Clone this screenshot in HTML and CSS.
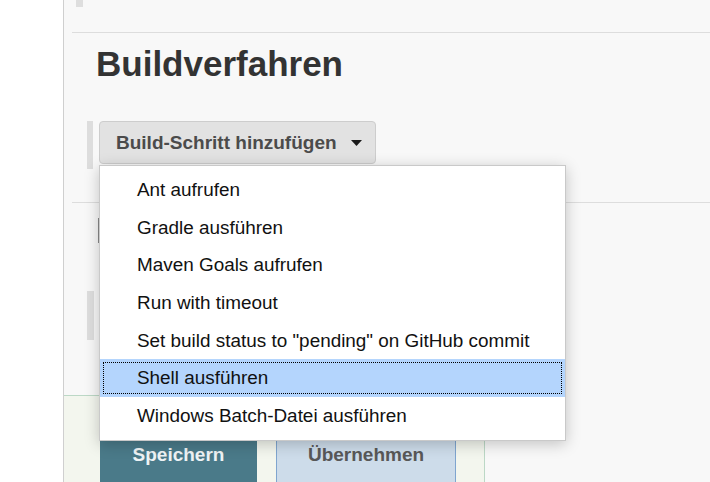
FILE: index.html
```html
<!DOCTYPE html>
<html lang="de">
<head>
<meta charset="utf-8">
<title>Buildverfahren</title>
<link rel="stylesheet" href="styles.css">
</head>
<body>
<div class="page">
  <div class="gutter"></div>
  <div class="main">
    <div class="stub"></div>
    <div class="rule"></div>
    <h1 class="title">Buildverfahren</h1>
    <div class="btn-row">
      <div class="side-bar"></div>
      <button class="add-btn">Build-Schritt hinzufügen
        <svg class="caret" width="11" height="6" viewBox="0 0 11 6"><path d="M0 0H11L5.5 6Z" fill="#1a1a1a"/></svg>
      </button>
    </div>
    <div class="rule rule-2"></div>
    <div class="cursor-bar"></div>
    <div class="side-block"></div>
    <div class="footer-bar">
      <button class="btn-save">Speichern</button>
      <button class="btn-apply">Übernehmen</button>
    </div>

    <ul class="menu">
      <li class="item">Ant aufrufen</li>
      <li class="item">Gradle ausführen</li>
      <li class="item">Maven Goals aufrufen</li>
      <li class="item">Run with timeout</li>
      <li class="item">Set build status to "pending" on GitHub commit</li>
      <li class="item item-active">Shell ausführen</li>
      <li class="item">Windows Batch-Datei ausführen</li>
    </ul>
  </div>
</div>
</body>
</html>
```

FILE: styles.css
```css
html, body {
  margin: 0;
  padding: 0;
  background: #ffffff;
  font-family: "Liberation Sans", Arial, Helvetica, sans-serif;
}

.page {
  display: flex;
  width: 710px;
  height: 482px;
  overflow: hidden;
}

.gutter {
  width: 63px;
  flex: none;
  background: #ffffff;
}

.main {
  flex: 1;
  position: relative;
  background: #f8f8f8;
  border-left: 1px solid #cfcfcf;
  height: 482px;
  overflow: hidden;
}

.stub {
  margin-left: 12px;
  width: 7px;
  height: 7px;
  background: #dedede;
}

.rule {
  margin: 25px 0 0 8px;
  border-top: 1px solid #dddddd;
}

.title {
  margin: 11px 0 0 32px;
  font-size: 35px;
  line-height: 40px;
  font-weight: bold;
  color: #333333;
}

.btn-row {
  display: flex;
  align-items: flex-start;
  margin: 37px 0 0 23px;
  gap: 6px;
}

.side-bar {
  width: 6px;
  height: 48px;
  background: #dddddd;
}

.add-btn {
  display: flex;
  align-items: center;
  gap: 14px;
  height: 43px;
  width: 277px;
  padding: 0 16px 0 16px;
  box-sizing: border-box;
  background: #e2e2e2;
  border: 1px solid #cdcdcd;
  border-radius: 4px;
  font-family: "Liberation Sans", Arial, sans-serif;
  font-size: 19px;
  font-weight: bold;
  color: #4b4b4b;
  white-space: nowrap;
}

.caret {
  flex: none;
  margin-top: 1px;
}

.rule-2 {
  margin-top: 33px;
}

.cursor-bar {
  margin: 15px 0 0 34px;
  width: 1px;
  height: 25px;
  background: #8a8a8a;
}

.side-block {
  margin: 48px 0 0 23px;
  width: 7px;
  height: 49px;
  background: #dedede;
}

.footer-bar {
  display: flex;
  gap: 19px;
  margin-top: 55px;
  width: 421px;
  height: 120px;
  padding: 36px 0 0 36px;
  box-sizing: border-box;
  background: #f3f6ee;
  border-top: 1px solid #bcd8c6;
  border-right: 1px solid #bcd8c6;
}

.btn-save,
.btn-apply {
  height: 60px;
  border: none;
  font-family: "Liberation Sans", Arial, sans-serif;
  font-size: 19px;
  font-weight: bold;
  padding: 0 0 14px 0;
}

.btn-save {
  width: 157px;
  background: #4a7a89;
  color: #eef3f5;
}

.btn-apply {
  width: 180px;
  background: #cddcea;
  border-left: 1px solid #7fa5cf;
  border-right: 1px solid #7fa5cf;
  color: #585858;
}

.menu {
  position: absolute;
  left: 35px;
  top: 165px;
  width: 467px;
  box-sizing: border-box;
  margin: 0;
  padding: 5px 0 5px 0;
  list-style: none;
  background: #ffffff;
  border: 1px solid #c9c9c9;
  box-shadow: 0 3px 14px rgba(0, 0, 0, 0.22);
}

.item {
  height: 37.7px;
  line-height: 37.7px;
  padding-left: 37px;
  font-size: 18.9px;
  color: #111111;
  white-space: nowrap;
}

.item-active {
  background: #b4d5fd;
  outline: 1px dotted #000000;
  outline-offset: -4px;
}
```
